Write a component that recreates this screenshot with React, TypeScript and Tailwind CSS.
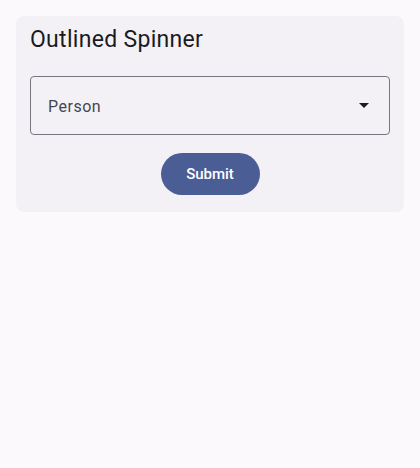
export default function App() {
  return (
    <div className="min-h-[468px] w-full bg-[#fcf9fc] pt-4 px-4 font-['Roboto',sans-serif]">
      <div className="rounded-lg bg-[#f3f1f6] px-[14px] pt-[10px] pb-[17px]">
        <h1 className="text-[23px] leading-[28px] tracking-[0.3px] text-[#1b1b1f]">Outlined Spinner</h1>

        <div className="mt-[22px] flex h-[59px] items-center justify-between rounded-[4px] border border-[#79747e] pl-[17px] pr-[19px] pt-[3px]">
          <span className="text-[16px] tracking-[0.5px] text-[#45464f]">Person</span>
          <svg width="10" height="5" viewBox="0 0 10 5" className="mr-[1px] -mt-[3px]">
            <path d="M0 0h10L5 5z" fill="#1b1b1f" />
          </svg>
        </div>

        <div className="mt-[18px] flex justify-center">
          <button className="h-[42px] w-[99px] rounded-full bg-[#4a5d94] text-[15px] font-medium text-white">
            Submit
          </button>
        </div>
      </div>
    </div>
  )
}
